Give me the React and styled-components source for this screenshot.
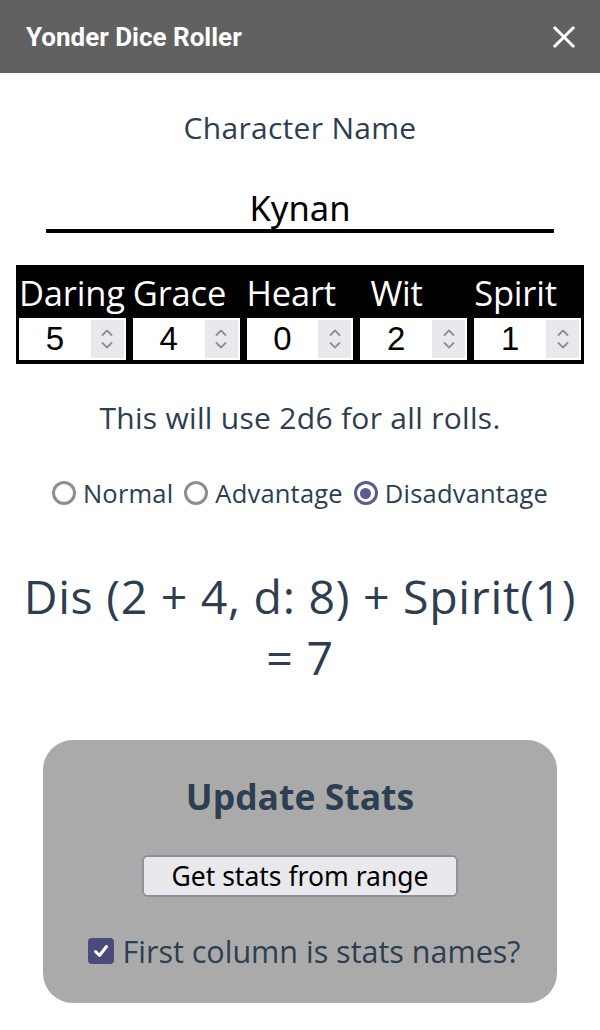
import React, { useState } from "react";
import styled, { createGlobalStyle } from "styled-components";

const Global = createGlobalStyle`
  html, body { margin: 0; padding: 0; background: #fff; }
  body { font-family: "Open Sans", Lato, sans-serif; color: #2c3e50; }
  * { box-sizing: border-box; }
`;

const Header = styled.header`
  height: 73px;
  background: #616161;
  display: flex;
  align-items: center;
  justify-content: space-between;
  padding: 0 23px 0 26px;
`;

const Title = styled.h1`
  margin: 0;
  font-family: Roboto, "Liberation Sans", sans-serif;
  font-weight: 700;
  font-size: 26px;
  color: #fff;
  letter-spacing: 0;
`;

const CloseButton = styled.button`
  border: none;
  background: transparent;
  padding: 0;
  width: 26px;
  height: 26px;
  display: flex;
  align-items: center;
  justify-content: center;
  cursor: pointer;
`;

const Main = styled.main`
  display: flex;
  flex-direction: column;
  align-items: center;
  padding-top: 39px;
`;

const FieldLabel = styled.div`
  font-size: 30px;
  line-height: 32px;
  letter-spacing: 0.3px;
  text-align: center;
`;

const NameInput = styled.input`
  margin-top: 41px;
  width: 508px;
  height: 48px;
  border: none;
  border-bottom: 4px solid #000;
  outline: none;
  text-align: center;
  font-family: "Noto Sans", Lato, sans-serif;
  font-size: 34.5px;
  color: #000;
  background: transparent;
  padding: 0;
`;

const StatsTable = styled.div`
  margin-top: 32px;
  width: 568px;
  background: #000;
  padding: 3px 3px 4px;
  display: grid;
  grid-template-columns: repeat(5, minmax(0, 1fr));
  column-gap: 7px;
`;

const StatLabel = styled.div`
  height: 50px;
  line-height: 50px;
  color: #fff;
  font-size: 34.5px;
  white-space: nowrap;
  padding-left: ${(p) => p.$indent || 0}px;
  letter-spacing: -0.2px;
`;

const NumberBox = styled.div`
  height: 42px;
  background: #fff;
  display: flex;
  align-items: center;
  padding: 2px 2px 2px 0;
  min-width: 0;
`;

const NumberText = styled.input`
  flex: 1;
  width: 0;
  min-width: 0;
  height: 100%;
  border: none;
  outline: none;
  background: transparent;
  text-align: center;
  font-family: "Liberation Sans", Arial, sans-serif;
  font-size: 33px;
  color: #000;
  padding: 0;
`;

const Spinner = styled.div`
  width: 33px;
  flex: none;
  height: 100%;
  background: #e9e9ed;
  display: flex;
  align-items: center;
  justify-content: center;
`;

const InfoText = styled.p`
  margin: 38px 0 0;
  font-size: 30px;
  line-height: 32px;
  letter-spacing: 0.3px;
  text-align: center;
`;

const RadioRow = styled.div`
  margin-top: 45px;
  display: flex;
  align-items: center;
  gap: 11px;
  font-size: 25.5px;
  line-height: 28px;
  letter-spacing: 0.2px;
`;

const RadioLabel = styled.label`
  display: flex;
  align-items: center;
  gap: 7px;
  cursor: pointer;
`;

const RadioCircle = styled.span`
  width: 24px;
  height: 24px;
  border-radius: 50%;
  border: 3px solid ${(p) => (p.$checked ? "#5b5b8f" : "#8e8e96")};
  display: flex;
  align-items: center;
  justify-content: center;
  background: #fff;
  &::after {
    content: "";
    width: 11px;
    height: 11px;
    border-radius: 50%;
    background: ${(p) => (p.$checked ? "#5b5b8f" : "transparent")};
  }
`;

const Result = styled.div`
  margin-top: 59px;
  width: 570px;
  font-size: 46.5px;
  line-height: 61px;
  letter-spacing: 0.7px;
  text-align: center;
`;

const Card = styled.section`
  margin-top: 52px;
  width: 514px;
  background: #aaaaaa;
  border-radius: 30px;
  padding: 35px 0 35px;
  display: flex;
  flex-direction: column;
  align-items: center;
`;

const CardTitle = styled.h2`
  margin: 0;
  font-size: 35.5px;
  line-height: 42px;
  font-weight: 700;
  color: #2c3e50;
`;

const RangeButton = styled.button`
  margin-top: 38px;
  width: 316px;
  height: 42px;
  background: #e9e9ed;
  border: 2px solid #8f8f9d;
  border-radius: 6px;
  font-family: "Noto Sans", "Liberation Sans", sans-serif;
  font-size: 26.5px;
  color: #000;
  padding: 0;
  cursor: pointer;
`;

const CheckRow = styled.label`
  margin-top: 37px;
  margin-left: 9px;
  display: flex;
  align-items: center;
  gap: 8px;
  font-size: 30.5px;
  line-height: 34px;
  cursor: pointer;
`;

const CheckBox = styled.span`
  width: 26px;
  height: 26px;
  flex: none;
  border-radius: 4px;
  background: #4a4a7c;
  display: flex;
  align-items: center;
  justify-content: center;
`;

const stats = [
  { name: "Daring", value: 5 },
  { name: "Grace", value: 4 },
  { name: "Heart", value: 0 },
  { name: "Wit", value: 2, indent: 10 },
  { name: "Spirit", value: 1 },
];

const modes = ["Normal", "Advantage", "Disadvantage"];

function SpinIcon() {
  return (
    <svg width="14" height="26" viewBox="0 0 14 26" fill="none" stroke="#8e8e96" strokeWidth="1.8" strokeLinecap="round" strokeLinejoin="round">
      <path d="M2.5 9 L7 4.5 L11.5 9" />
      <path d="M2.5 17 L7 21.5 L11.5 17" />
    </svg>
  );
}

export default function App() {
  const [mode, setMode] = useState("Disadvantage");
  return (
    <>
      <Global />
      <Header>
        <Title>Yonder Dice Roller</Title>
        <CloseButton aria-label="Close">
          <svg width="24" height="24" viewBox="0 0 24 24" stroke="#fff" strokeWidth="3" strokeLinecap="square">
            <path d="M3 3 L21 21 M21 3 L3 21" />
          </svg>
        </CloseButton>
      </Header>
      <Main>
        <FieldLabel>Character Name</FieldLabel>
        <NameInput defaultValue="Kynan" />
        <StatsTable>
          {stats.map((s) => (
            <StatLabel key={s.name} $indent={s.indent}>{s.name}</StatLabel>
          ))}
          {stats.map((s) => (
            <NumberBox key={s.name}>
              <NumberText defaultValue={s.value} />
              <Spinner><SpinIcon /></Spinner>
            </NumberBox>
          ))}
        </StatsTable>
        <InfoText>This will use 2d6 for all rolls.</InfoText>
        <RadioRow>
          {modes.map((m) => (
            <RadioLabel key={m} onClick={() => setMode(m)}>
              <RadioCircle $checked={mode === m} />
              {m}
            </RadioLabel>
          ))}
        </RadioRow>
        <Result>Dis (2 + 4, d: 8) + Spirit(1) = 7</Result>
        <Card>
          <CardTitle>Update Stats</CardTitle>
          <RangeButton>Get stats from range</RangeButton>
          <CheckRow>
            <CheckBox>
              <svg width="18" height="18" viewBox="0 0 18 18" fill="none" stroke="#fff" strokeWidth="3" strokeLinecap="round" strokeLinejoin="round">
                <path d="M3.5 9.5 L7.5 13.5 L14.5 4.5" />
              </svg>
            </CheckBox>
            First column is stats names?
          </CheckRow>
        </Card>
      </Main>
    </>
  );
}
